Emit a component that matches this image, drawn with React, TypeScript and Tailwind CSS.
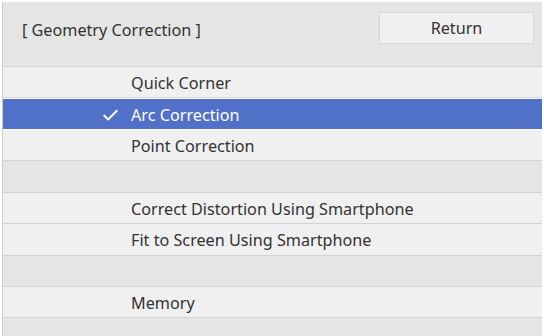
import { Check } from 'lucide-react'

type Item = { label?: string; h: string; selected?: boolean }

const items: Item[] = [
  { label: 'Quick Corner', h: 'h-[31px]' },
  { label: 'Arc Correction', h: 'h-[32px]', selected: true },
  { label: 'Point Correction', h: 'h-[31px]' },
  { h: 'h-[32px]' },
  { label: 'Correct Distortion Using Smartphone', h: 'h-[31px]' },
  { label: 'Fit to Screen Using Smartphone', h: 'h-[32px]' },
  { h: 'h-[31px]' },
  { label: 'Memory', h: 'h-[31px]' },
]

function Row({ item }: { item: Item }) {
  if (!item.label) {
    return <div className={`${item.h} shrink-0 bg-[#e5e5e5] border-b border-[#d3d3d3]`} />
  }
  if (item.selected) {
    return (
      <div className={`${item.h} shrink-0 bg-white py-px`}>
        <div className="h-full bg-[#5170c8] flex items-center pt-[2px] text-white">
          <div className="w-[128px] flex justify-end pr-[11px]">
            <Check size={19} strokeWidth={2.4} />
          </div>
          <span>{item.label}</span>
        </div>
      </div>
    )
  }
  return (
    <div className={`${item.h} shrink-0 bg-[#f0f0f0] border-b border-[#d3d3d3] flex items-center pt-[2px] pl-[128px] text-[#333]`}>
      {item.label}
    </div>
  )
}

export default function App() {
  return (
    <div
      className="w-[544px] h-[336px] bg-white pt-[2px] pl-[2px] pr-[2px] overflow-hidden text-[16.2px]"
      style={{ fontFamily: '"Noto Sans", "Open Sans", sans-serif' }}
    >
      <div className="h-full border-l border-[#cdcdcd] bg-[#e5e5e5] flex flex-col">
        <div className="h-[65px] shrink-0 flex items-start justify-between border-b border-[#d3d3d3] pl-[19px] pr-[8px]">
          <div className="mt-[16px] text-[#333]">[ Geometry Correction ]</div>
          <button className="mt-[10px] w-[155px] h-[32px] bg-[#f0f0f0] border border-[#d6d6d6] text-[#333]">
            Return
          </button>
        </div>
        {items.map((item, i) => (
          <Row key={i} item={item} />
        ))}
      </div>
    </div>
  )
}
